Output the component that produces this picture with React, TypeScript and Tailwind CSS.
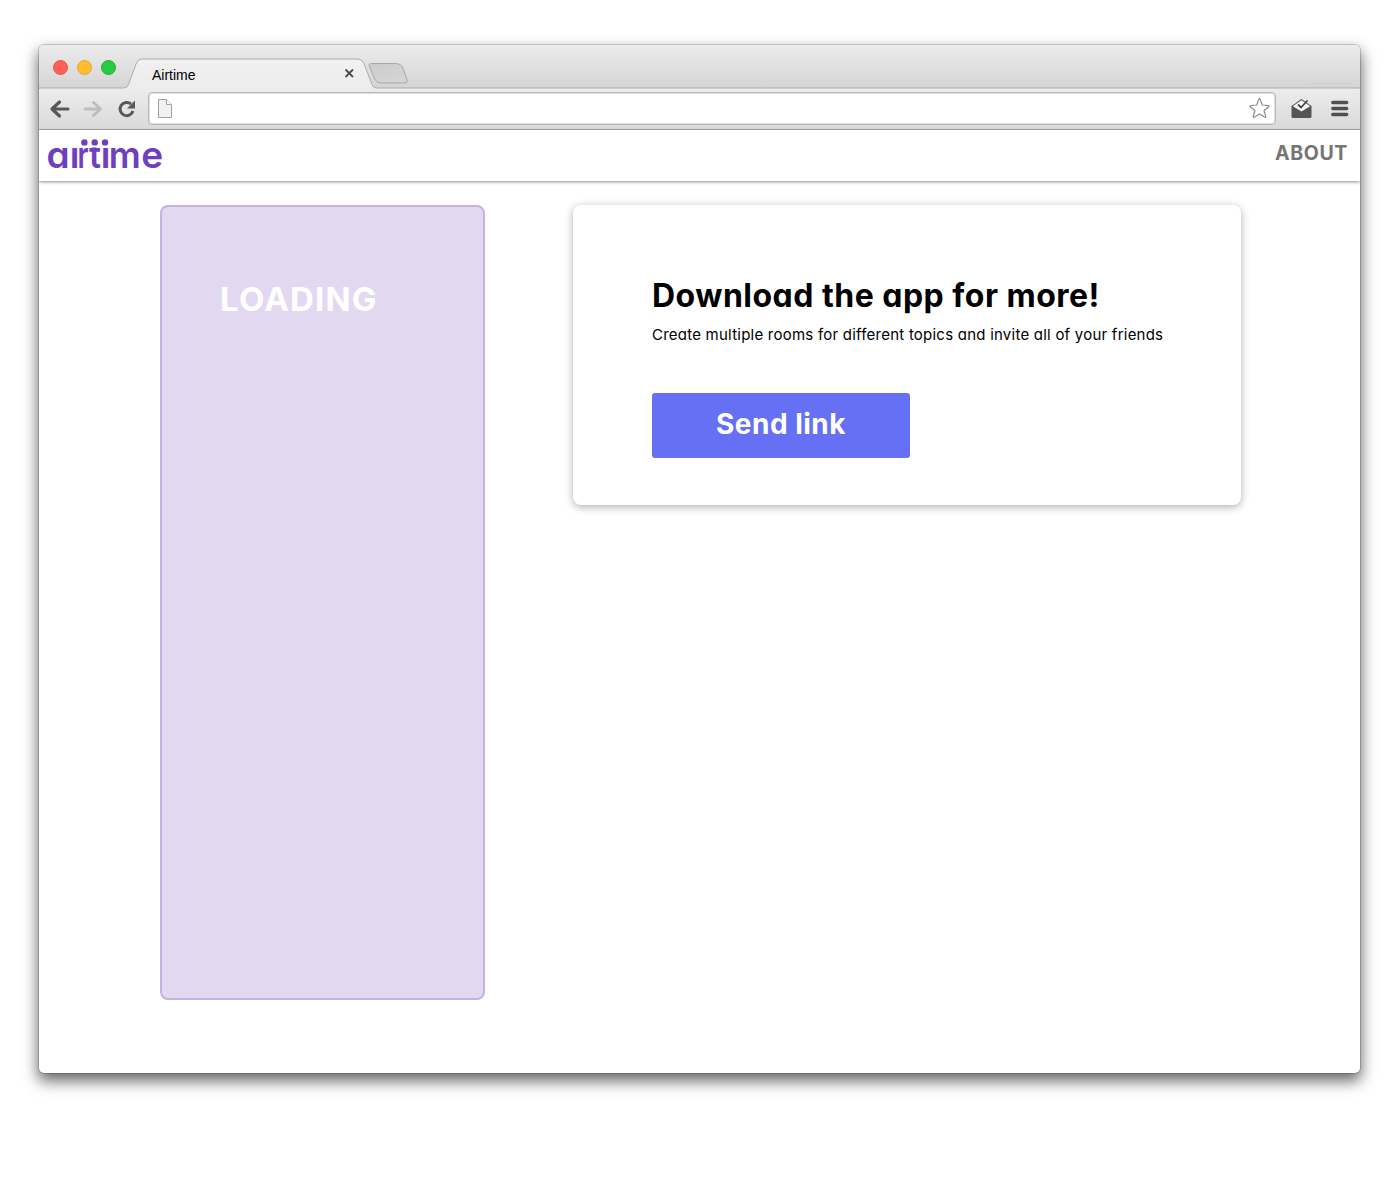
import React from "react";

const brandFont = "font-['Inter',sans-serif] [font-feature-settings:'cv11']";

function Logo() {
  return (
    <svg width="122" height="51" viewBox="0 0 122 51" className="block overflow-visible" role="img" aria-label="airtime">
      <defs>
        <clipPath id="xHeight">
          <rect x="0" y="17.400" width="122" height="24" />
        </clipPath>
      </defs>
      <g fill="#6f3fc0">
        <g clipPath="url(#xHeight)">
          <text y="37.700" fontSize="37" fontWeight="600" className={brandFont}>
            <tspan x="-0.500">a</tspan>
            <tspan x="22.700">ı</tspan>
            <tspan x="30.400" textLength="11" lengthAdjust="spacingAndGlyphs">r</tspan>
            <tspan x="42" textLength="12" lengthAdjust="spacingAndGlyphs">t</tspan>
            <tspan x="53.700">ı</tspan>
            <tspan x="61.800" textLength="32" lengthAdjust="spacingAndGlyphs">m</tspan>
            <tspan x="94.300">e</tspan>
          </text>
        </g>
        <circle cx="37.400" cy="12.400" r="3.200" />
        <circle cx="47.700" cy="12.400" r="3.200" />
        <circle cx="58" cy="12.400" r="3.200" />
      </g>
    </svg>
  );
}

function TabStrip() {
  return (
    <div className="relative h-[43px] bg-linear-to-b from-[#ececec] to-[#d5d5d5]">
      <svg width="1321" height="44" viewBox="0 0 1321 44" className="absolute inset-0">
        <defs>
          <linearGradient id="tab" x1="0" y1="0" x2="0" y2="1">
            <stop offset="0" stopColor="#f1f1f1" />
            <stop offset="1" stopColor="#ececec" />
          </linearGradient>
          <linearGradient id="newTab" x1="0" y1="0" x2="1" y2="1">
            <stop offset="0" stopColor="#cccccc" />
            <stop offset="1" stopColor="#d6d6d6" />
          </linearGradient>
        </defs>
        <path d="M0 43H85Q88 43 89.500 39.500L97 19Q99 14 102.500 14H319Q323 14 325 18.500L333 39.500Q334.500 43 337 43H1321V45H0Z" fill="url(#tab)" stroke="#ababab" />
        <path d="M332.500 18.500H357.500Q361.500 18.500 363.500 22L368 34.500Q369 38 365.500 38H341.500Q338 38 336 34.500L330.500 22Q329 18.500 332.500 18.500Z" fill="url(#newTab)" stroke="#a9a9a9" />
        <path d="M306.500 24.500L314 32M314 24.500L306.500 32" stroke="#4c4c4c" strokeWidth="1.800" />
        <path d="M1272 38.500H1312" stroke="#cdcdcd" />
      </svg>
      <div className="relative flex h-full">
        <div className="flex gap-[9px] pt-[15px] pl-[14px]">
          <span className="size-[15px] rounded-full border border-[#e9524a] bg-[#ff5f57]" />
          <span className="size-[15px] rounded-full border border-[#e5a52f] bg-[#ffbd2e]" />
          <span className="size-[15px] rounded-full border border-[#1fb030] bg-[#28ca42]" />
        </div>
        <span className="mt-[20px] ml-[36px] font-['Liberation_Sans',sans-serif] text-[14px] leading-5 text-black">Airtime</span>
      </div>
    </div>
  );
}

function Toolbar() {
  return (
    <div className="flex h-[42px] items-center border-b border-[#ababab] bg-linear-to-b from-[#ededed] to-[#dadada]">
      <svg width="109" height="40" viewBox="0 0 109 40" className="shrink-0" fill="none">
        <path d="M29 20H13.500M20.500 13L13 20L20.500 27" stroke="#585858" strokeWidth="3.200" strokeLinecap="round" strokeLinejoin="round" />
        <path d="M46 20H61M54.500 13.500L61.500 20L54.500 26.500" stroke="#bdbdbd" strokeWidth="3" strokeLinecap="round" strokeLinejoin="round" />
        <path d="M92 15A6.600 6.600 0 1 0 94 22" stroke="#585858" strokeWidth="3" />
        <path d="M96 11.500V19.500H88Z" fill="#585858" />
      </svg>
      <div className="flex h-[33px] w-[1128px] shrink-0 items-center justify-between rounded-[4px] border border-[#b8b8b8] bg-white px-[6px] shadow-[inset_0_0_0_1px_#e0e0e0]">
        <svg width="18" height="21" viewBox="0 0 18 21" className="ml-px" fill="none">
          <path d="M2.500 1.500H10.500L15.500 6.500V19.500H2.500Z" fill="#f1f1f1" stroke="#a0a0a0" />
          <path d="M10.500 1.500V6.500H15.500" fill="#fff" stroke="#a0a0a0" />
        </svg>
        <svg width="23" height="23" viewBox="0 0 23 23" className="-mr-[2px]" fill="none">
          <path d="M11.500 1.500Q12 1.500 12.300 2.500L14.300 8L20 8.500Q21.800 9 20.500 10L16 13.700L17.700 19Q18 21 16.300 20L11.500 17L6.700 20Q5 21 5.300 19L7 13.700L2.500 10Q1.200 9 3 8.500L8.700 8L10.700 2.500Q11 1.500 11.500 1.500Z" stroke="#8b8b8b" strokeWidth="1.200" strokeLinejoin="round" />
        </svg>
      </div>
      <svg width="84" height="40" viewBox="0 0 84 40" className="shrink-0" fill="none">
        <path d="M15.500 17L25.500 10L35.500 17V27.500Q35.500 29 34 29H17Q15.500 29 15.500 27.500Z" fill="#555" />
        <path d="M16.800 17.300L25.500 11.200L34.200 17.300L25.500 22.500Z" fill="#f7f7f7" />
        <path d="M22 15.500L25 18.500L31.500 11.500" stroke="#444" strokeWidth="1.800" />
        <path d="M56.800 13.500H70.700M56.800 19.500H70.700M56.800 25.500H70.700" stroke="#505050" strokeWidth="3.400" strokeLinecap="round" />
      </svg>
    </div>
  );
}

export default function App() {
  return (
    <div className="flex h-[1200px] w-[1400px] overflow-hidden bg-white pt-[45px] pl-[39px]">
      <div className="h-[1028px] w-[1321px] overflow-hidden rounded-[5px] bg-white shadow-[0_0_0_1px_rgba(0,0,0,0.16),0_7px_15px_1px_rgba(0,0,0,0.6)]">
        <TabStrip />
        <Toolbar />
        <header className="flex h-[51px] items-start justify-between bg-white pr-[12px] pl-[8px] shadow-[0_1px_3px_rgba(0,0,0,0.45)]">
          <Logo />
          <a className={`${brandFont} mt-[10px] text-[19.500px] leading-[26px] font-bold tracking-[0.65px] text-[#757575]`}>ABOUT</a>
        </header>
        <main className="flex items-start pt-[24px] pl-[121px]">
          <section className="h-[795px] w-[325px] rounded-[8px] border-2 border-[#c5b1e2] bg-[#e2d9f1] pt-[72px] pl-[58px]">
            <p className={`${brandFont} text-[33px] leading-[40px] font-bold tracking-[1.2px] text-white`}>LOADING</p>
          </section>
          <section className={`${brandFont} ml-[88px] h-[300px] w-[668px] rounded-[8px] bg-white pt-[71px] pl-[79px] text-black shadow-[0_2px_8px_rgba(0,0,0,0.32)]`}>
            <h1 className="text-[32px] leading-[40px] font-bold tracking-[0.48px] whitespace-nowrap">Download the app for more!</h1>
            <p className="mt-[8px] text-[15px] leading-[22px] tracking-[0.23px] whitespace-nowrap">Create multiple rooms for different topics and invite all of your friends</p>
            <button className="mt-[47px] flex h-[65px] w-[258px] items-center justify-center rounded-[3px] bg-[#6670f5] pb-[3px] text-[28px] font-bold tracking-[0.5px] text-white">Send link</button>
          </section>
        </main>
      </div>
    </div>
  );
}
